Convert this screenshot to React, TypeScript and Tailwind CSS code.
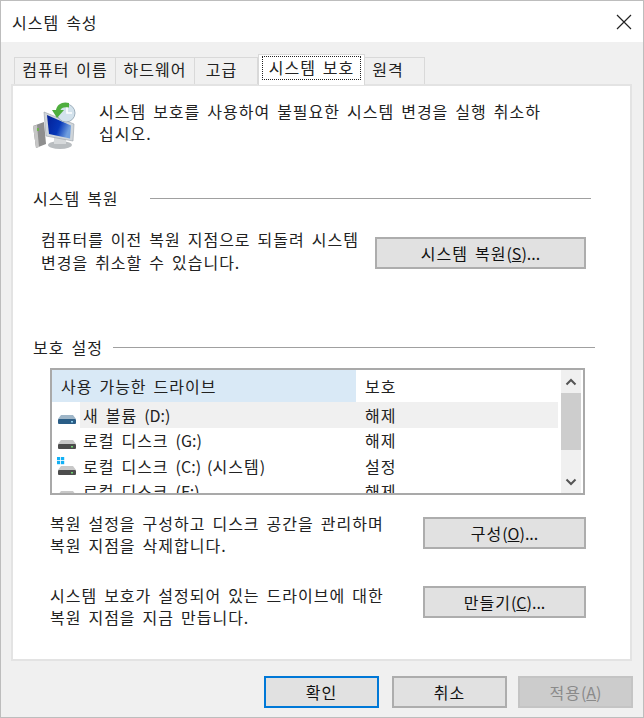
const font = { fontFamily: '"Noto Sans CJK KR", "Noto Sans", sans-serif' };

function Tab({ label, className }: { label: string; className: string }) {
  return (
    <div className={`flex h-[27px] items-center justify-center border border-b-0 border-[#d9d9d9] bg-[#f0f0f0] pb-[4px] text-[#222] ${className}`}>
      {label}
    </div>
  );
}

function Btn({ children, className = "", variant = "normal" }: { children: React.ReactNode; className?: string; variant?: "normal" | "primary" | "disabled" }) {
  const look =
    variant === "primary"
      ? "border-[#0078d7] bg-[#e1e1e1] text-[#111]"
      : variant === "disabled"
        ? "border-[#c4c4c4] bg-[#cccccc] text-[#8a8a8a]"
        : "border-[#adadad] bg-[#e1e1e1] text-[#111]";
  return (
    <div className={`flex h-[32px] shrink-0 items-center justify-center border-2 ${look} ${className}`}>
      {children}
    </div>
  );
}

function Accel({ pre, k, post = "" }: { pre: string; k: string; post?: string }) {
  return (
    <span className="whitespace-pre">
      {pre}
      <span className="tracking-normal">
        (<span className="underline">{k}</span>){post}
      </span>
    </span>
  );
}

function Section({ title, lineClass }: { title: string; lineClass: string }) {
  return (
    <div className="flex h-[22px] shrink-0 items-center">
      <span className="whitespace-nowrap text-[#222]">{title}</span>
      <div className={`h-px bg-[#a0a0a0] ${lineClass}`} />
    </div>
  );
}

function DriveIcon({ blue, win }: { blue?: boolean; win?: boolean }) {
  return (
    <svg width="22" height="20" viewBox="0 0 22 20" className="mt-[2px] shrink-0">
      <path d="M4 9 L16 9 L19 13 L1 13 Z" fill={blue ? "#9fb6c8" : "#c8c8c8"} />
      <rect x="1" y="13" width="18" height="5" rx="1" fill={blue ? "#2a5d86" : "#4c4c4c"} />
      <rect x="14" y="15" width="2" height="1.5" fill={blue ? "#8fd0ee" : "#6fd06f"} />
      {win && (
        <g fill="#12b0f5">
          <rect x="0" y="0" width="3.2" height="3.2" />
          <rect x="4" y="0" width="3.2" height="3.2" />
          <rect x="0" y="4" width="3.2" height="3.2" />
          <rect x="4" y="4" width="3.2" height="3.2" />
        </g>
      )}
    </svg>
  );
}

function Row({ icon, name, state, active }: { icon: React.ReactNode; name: React.ReactNode; state: string; active?: boolean }) {
  return (
    <div className="flex h-[25.5px] shrink-0 items-center text-[#222]">
      <div className="flex w-[28px] shrink-0 justify-end pl-[6px] pr-[1px]">{icon}</div>
      <div className={`flex h-full flex-1 items-center ${active ? "bg-[#f0f0f0]" : ""}`}>
        <div className="w-[276px] whitespace-pre pl-[3px]">{name}</div>
        <div className="pl-[9px]">{state}</div>
      </div>
    </div>
  );
}

function Chevron({ up }: { up?: boolean }) {
  return (
    <svg width="12" height="8" viewBox="0 0 12 8">
      <path d={up ? "M1.5 6.5 L6 2 L10.5 6.5" : "M1.5 1.5 L6 6 L10.5 1.5"} fill="none" stroke="#555" strokeWidth="2" />
    </svg>
  );
}

function HeroIcon() {
  return (
    <svg width="46" height="50" viewBox="0 0 46 50" className="shrink-0">
      <defs>
        <linearGradient id="scr" x1="0" y1="0" x2="1" y2="0.4">
          <stop offset="0" stopColor="#041f96" />
          <stop offset="0.6" stopColor="#0637b8" />
          <stop offset="1" stopColor="#6f9ede" />
        </linearGradient>
      </defs>
      <path d="M0 26 L11 22 L13 44 L3 48 Z" fill="#8e8e8e" />
      <path d="M0 26 L4 25 L6 47 L3 48 Z" fill="#c6c6c6" />
      <rect x="4" y="28" width="2" height="3" fill="#6fb04f" />
      <ellipse cx="27" cy="45" rx="12" ry="4" fill="#b9bdc0" />
      <path d="M21 36 L33 38 L33 44 L21 44 Z" fill="#d6d9db" />
      <path d="M11 12 L41 24 L40 41 L13 36 Z" fill="#cfd5da" stroke="#98a0a6" strokeWidth="0.6" />
      <path d="M14 15 L38 25.5 L37 38.5 L16 34 Z" fill="url(#scr)" />
      <circle cx="33" cy="13" r="9" fill="#d3e2ec" stroke="#9fb0bd" />
      <path d="M34 7 V13 H39" fill="none" stroke="#fff" strokeWidth="1.6" />
      <path d="M36 3 C30 1 24 4 23 10 L19 10 L24 18 L31 10 L27.5 10 C28 8 31 6.5 36 7.5 Z" fill="#4fae3e" />
    </svg>
  );
}

export default function App() {
  return (
    <div style={font} className="relative flex h-[718px] w-[644px] flex-col overflow-hidden border border-[#bdbdbd] bg-[#f0f0f0] text-[16px] leading-none tracking-[1px] [word-spacing:2.4px]">
      <div className="flex h-[41px] shrink-0 items-center justify-between bg-white pl-[11px] pr-[11px]">
        <span className="text-[#222]">시스템 속성</span>
        <svg width="16" height="16" viewBox="0 0 16 16">
          <path d="M1 1 L15 15 M15 1 L1 15" stroke="#222" strokeWidth="1.2" />
        </svg>
      </div>

      <div className="flex h-[42px] shrink-0 items-end pl-[13px]">
        <Tab label="컴퓨터 이름" className="w-[102px]" />
        <Tab label="하드웨어" className="w-[79px] border-l-0" />
        <Tab label="고급" className="w-[63px] border-l-0 pr-[9px]" />
        <div className="relative z-10 mb-[-1px] flex h-[31px] w-[107px] items-center justify-center border border-b-0 border-[#d9d9d9] bg-white pb-[4px] text-[#222]">
          <div className="flex h-[24px] w-[99px] items-center justify-center border border-dotted border-[#222] pb-[2px]">시스템 보호</div>
        </div>
        <Tab label="원격" className="w-[60px] border-l-0 pr-[13px]" />
      </div>

      <div className="mx-[10px] flex h-[577px] w-[621px] shrink-0 flex-col border-2 border-[#e3e3e3] bg-white pl-[20px] pr-[35px]">
        <div className="flex h-[101px] shrink-0 pt-[14px]">
          <HeroIcon />
          <p className="ml-[20px] whitespace-nowrap leading-[22px] text-[#222]">
            시스템 보호를 사용하여 불필요한 시스템 변경을 실행 취소하
            <br />
            십시오.
          </p>
        </div>

        <Section title="시스템 복원" lineClass="ml-[31px] w-[441px]" />
        <div className="flex h-[127px] shrink-0 items-start pl-[8px] pt-[19px]">
          <p className="w-[334px] whitespace-nowrap leading-[23px] text-[#222]">
            컴퓨터를 이전 복원 지점으로 되돌려 시스템
            <br />
            변경을 취소할 수 있습니다.
          </p>
          <Btn className="mt-[9px] w-[211px]">
            <Accel pre="시스템 복원" k="S" post="..." />
          </Btn>
        </div>

        <Section title="보호 설정" lineClass="ml-[10px] w-[490px]" />
        <div className="ml-[17px] mt-[10px] flex h-[127px] w-[535px] shrink-0 overflow-hidden border-2 border-[#a9a9a9]">
          <div className="flex min-w-0 flex-1 flex-col overflow-hidden">
            <div className="flex h-[32px] shrink-0 items-center text-[#222]">
              <div className="flex h-full w-[304px] items-center bg-[#d9e9f6] pl-[9px]">사용 가능한 드라이브</div>
              <div className="pl-[9px]">보호</div>
            </div>
            <Row icon={<DriveIcon blue />} name={<>새 볼륨 <span className="tracking-normal">(D:)</span></>} state="해제" active />
            <Row icon={<DriveIcon />} name={<>로컬 디스크 <span className="tracking-normal">(G:)</span></>} state="해제" />
            <Row icon={<DriveIcon win />} name={<>로컬 디스크 <span className="tracking-normal">(C:) (</span>시스템<span className="tracking-normal">)</span></>} state="설정" />
            <Row icon={<DriveIcon />} name={<>로컬 디스크 <span className="tracking-normal">(F:)</span></>} state="해제" />
          </div>
          <div className="ml-[3px] mr-[2px] flex w-[20px] shrink-0 flex-col bg-[#f0f0f0]">
            <div className="flex h-[23px] items-center justify-center"><Chevron up /></div>
            <div className="h-[57px] bg-[#cdcdcd]" />
            <div className="flex-1" />
            <div className="flex h-[23px] items-center justify-center"><Chevron /></div>
          </div>
        </div>

        <div className="mt-[17px] flex h-[41px] shrink-0 items-center pl-[17px]">
          <p className="w-[373px] whitespace-nowrap pt-[3px] leading-[22px] text-[#222]">
            복원 설정을 구성하고 디스크 공간을 관리하며
            <br />
            복원 지점을 삭제합니다.
          </p>
          <Btn className="w-[163px]"><Accel pre="구성" k="O" post="..." /></Btn>
        </div>
        <div className="mt-[28px] flex h-[41px] shrink-0 items-center pl-[17px]">
          <p className="w-[373px] whitespace-nowrap pt-[8px] leading-[22px] text-[#222]">
            시스템 보호가 설정되어 있는 드라이브에 대한
            <br />
            복원 지점을 지금 만듭니다.
          </p>
          <Btn className="w-[163px]"><Accel pre="만들기" k="C" post="..." /></Btn>
        </div>
      </div>

      <div className="mt-[15px] flex justify-end pr-[10px]">
        <Btn variant="primary" className="w-[115px]">확인</Btn>
        <Btn className="ml-[13px] w-[115px]">취소</Btn>
        <Btn variant="disabled" className="ml-[11px] w-[115px]">
          <Accel pre="적용" k="A" />
        </Btn>
      </div>
    </div>
  );
}
